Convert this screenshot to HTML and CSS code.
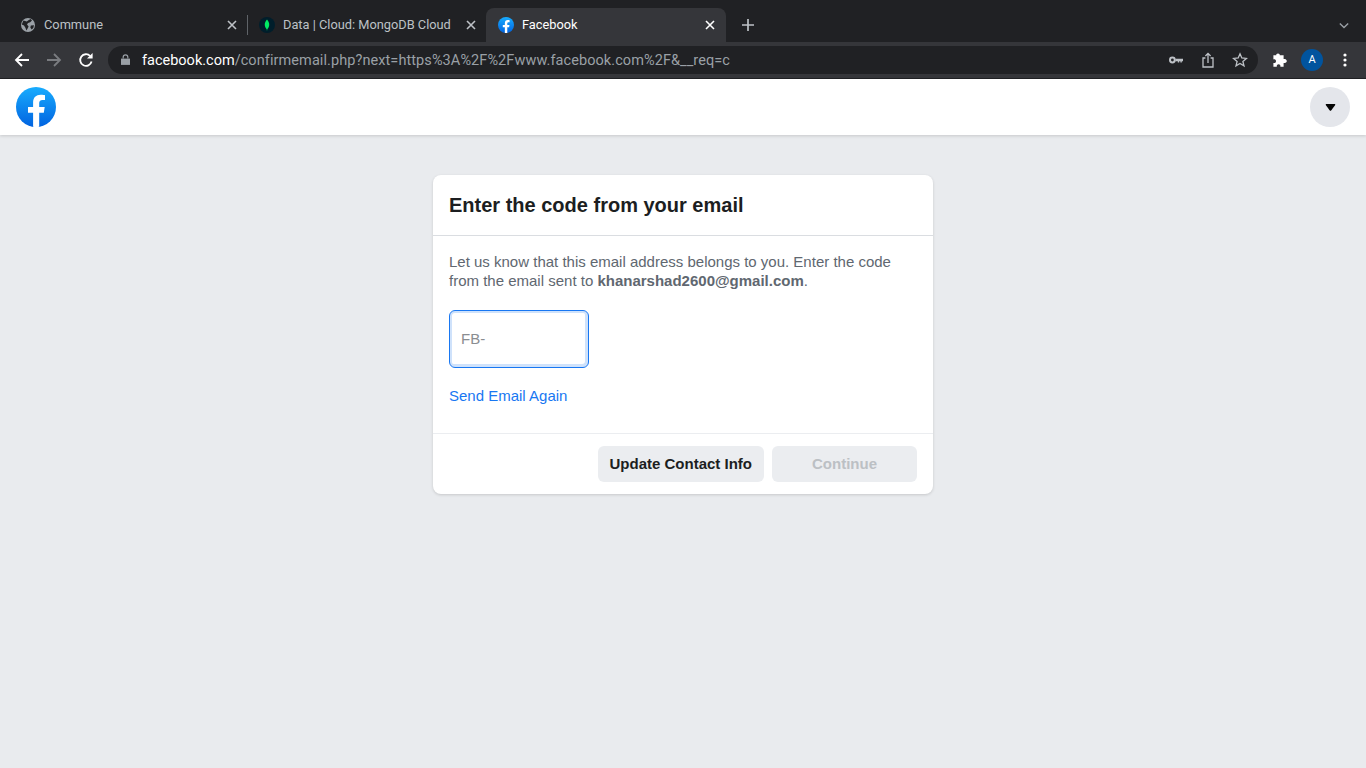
FILE: index.html
```html
<!DOCTYPE html>
<html>
<head>
    <meta charset="UTF-8">
    <title>Facebook</title>
    <link rel="stylesheet" href="styles.css">
</head>
<body>
    <div class="tabstrip">
        <div class="tab">
            <svg class="favicon" viewBox="0 0 16 16"><circle cx="8" cy="8" r="7" fill="#9aa0a6"/><path d="M3.4 3.6 6.8 4.6 8.4 3.2 10.6 2 12 3.4 10.2 5.2 8 6 7 7.6 8.6 9.4 7.6 11.4 6.4 13.6 5.4 10.8 4 8.6 1.8 7.4Z" fill="#202124"/><path d="M10.8 8.6 14 8.2 13.4 10.8 11.8 12.6 10.4 10.8Z" fill="#202124"/></svg>
            <span class="tab-title">Commune</span>
            <svg class="tab-close" viewBox="0 0 10 10"><path d="M1 1 9 9M9 1 1 9"/></svg>
        </div>
        <div class="tab tab-sep">
            <svg class="favicon" viewBox="0 0 16 16"><circle cx="8" cy="8" r="8" fill="#001e2b"/><path d="M8 2.5C9.8 4.6 10.4 6.4 10.2 8.2 10 10.2 8.9 11.4 8.3 12.2L8 14 7.7 12.2C7.1 11.4 6 10.2 5.8 8.2 5.6 6.4 6.2 4.6 8 2.5Z" fill="#00ed64"/></svg>
            <span class="tab-title">Data | Cloud: MongoDB Cloud</span>
            <svg class="tab-close" viewBox="0 0 10 10"><path d="M1 1 9 9M9 1 1 9"/></svg>
        </div>
        <div class="tab tab-active">
            <svg class="favicon" viewBox="0 0 40 40"><defs><linearGradient id="fbtab" x1="0" y1="0" x2="0" y2="1"><stop offset="0" stop-color="#18acfe"/><stop offset="1" stop-color="#0163e0"/></linearGradient></defs><circle cx="20" cy="20" r="20" fill="url(#fbtab)"/><path d="M27.8 25.8 28.7 20H23.2V16.2C23.2 14.6 24 13.1 26.5 13.1H29V8.2C29 8.2 26.7 7.8 24.6 7.8 20.1 7.8 17.1 10.6 17.1 15.5V20H12V25.8H17.1V39.8C18.1 40 19 40 20.1 40 21.2 40 22.2 40 23.2 39.8V25.8Z" fill="#fff"/></svg>
            <span class="tab-title">Facebook</span>
            <svg class="tab-close" viewBox="0 0 10 10"><path d="M1 1 9 9M9 1 1 9"/></svg>
        </div>
        <svg class="new-tab" viewBox="0 0 12 12"><path d="M6 0V12M0 6H12"/></svg>
        <svg class="tab-search" viewBox="0 0 12 8"><path d="M1 1.5 6 6.5 11 1.5"/></svg>
    </div>

    <div class="toolbar">
        <svg class="nav-icon" viewBox="0 0 16 16"><path d="M15 8H2M8 2 2 8 8 14"/></svg>
        <svg class="nav-icon nav-off" viewBox="0 0 16 16"><path d="M1 8H14M8 2 14 8 8 14"/></svg>
        <svg class="nav-icon" viewBox="0 0 16 16"><path d="M13.6 9.6A5.8 5.8 0 1 1 12.2 4"/><path class="solid" d="M14.6 1V6.6H9Z"/></svg>
        <div class="omnibox">
            <svg class="lock" viewBox="0 0 10 12"><path d="M0 5H10V12H0Z"/><path class="ring" d="M2.4 5V3.4A2.6 2.6 0 0 1 7.6 3.4V5"/></svg>
            <span class="url"><span class="url-host">facebook.com</span>/confirmemail.php?next=https%3A%2F%2Fwww.facebook.com%2F&amp;__req=c</span>
            <svg class="omni-icon" viewBox="0 0 16 16"><circle cx="4.4" cy="8" r="2.4" fill="none" stroke="#bdc1c6" stroke-width="2"/><path d="M7.4 6.8H15V9.2H13.8V10.4H12.4V9.2H11.2V10.4H9.8V9.2H7.4Z" fill="#bdc1c6"/></svg>
            <svg class="omni-icon" viewBox="0 0 16 16"><path class="line" d="M5.4 6H3V15H13V6H10.6M8 11V1.5M5.4 4 8 1.4 10.6 4"/></svg>
            <svg class="omni-icon" viewBox="0 0 16 16"><path class="line" d="M8 1.8 9.8 6 14.4 6.4 10.9 9.4 12 13.9 8 11.5 4 13.9 5.1 9.4 1.6 6.4 6.2 6Z"/></svg>
        </div>
        <svg class="ext-icon" viewBox="0 0 16 16"><path d="M6 1.5C7.2 1.5 7.8 2.3 7.8 3.2H11.6V7C13 6.8 14.8 7.4 14.8 9 14.8 10.6 13 11.2 11.6 11V14.8H8.4C8.6 13.4 8 12.2 6.6 12.2 5.2 12.2 4.6 13.4 4.8 14.8H1.4V11C2.8 11.2 4 10.6 4 9.2 4 7.8 2.8 7.2 1.4 7.4V3.2H4.2C4.2 2.3 4.8 1.5 6 1.5Z"/></svg>
        <div class="avatar">A</div>
        <svg class="menu-icon" viewBox="0 0 4 14"><circle cx="2" cy="2" r="1.6"/><circle cx="2" cy="7" r="1.6"/><circle cx="2" cy="12" r="1.6"/></svg>
    </div>

    <header class="fb-header">
        <svg class="fb-logo" viewBox="0 0 40 40"><defs><linearGradient id="fblogo" x1="0" y1="0" x2="0" y2="1"><stop offset="0" stop-color="#18acfe"/><stop offset="1" stop-color="#0163e0"/></linearGradient></defs><circle cx="20" cy="20" r="20" fill="url(#fblogo)"/><path d="M27.8 25.8 28.7 20H23.2V16.2C23.2 14.6 24 13.1 26.5 13.1H29V8.2C29 8.2 26.7 7.8 24.6 7.8 20.1 7.8 17.1 10.6 17.1 15.5V20H12V25.8H17.1V39.8C18.1 40 19 40 20.1 40 21.2 40 22.2 40 23.2 39.8V25.8Z" fill="#fff"/></svg>
        <div class="account-btn"><svg viewBox="0 0 12 8"><path d="M0.6 1.2C0.4 0.6 0.7 0 1.4 0H10.6C11.3 0 11.6 0.6 11.4 1.2 11.2 1.6 7 7.2 6.6 7.6 6.3 7.9 5.7 7.9 5.4 7.6 5 7.2 0.8 1.6 0.6 1.2Z"/></svg></div>
    </header>

    <main class="page">
        <div class="card">
            <h2 class="card-title">Enter the code from your email</h2>
            <div class="card-body">
                <p class="card-text">Let us know that this email address belongs to you. Enter the code from the email sent to <strong>khanarshad2600@gmail.com</strong>.</p>
                <input class="code-input" type="text" placeholder="FB-">
                <a class="resend" href="#">Send Email Again</a>
            </div>
            <div class="card-footer">
                <button class="btn">Update Contact Info</button>
                <button class="btn btn-disabled" disabled>Continue</button>
            </div>
        </div>
    </main>
</body>
</html>
```

FILE: styles.css
```css
* {
  box-sizing: border-box;
}

html, body {
  height: 100%;
}

body {
  margin: 0;
  display: flex;
  flex-direction: column;
  overflow: hidden;
  background-color: #e9ebee;
  font-family: "Liberation Sans", Arial, sans-serif;
}

/* browser chrome */
.tabstrip {
  display: flex;
  align-items: flex-end;
  height: 42px;
  padding-left: 8px;
  background-color: #202124;
}

.tab {
  position: relative;
  display: flex;
  align-items: center;
  width: 239px;
  height: 34px;
  padding: 0 9px 0 12px;
  color: #bdc1c6;
  font-family: Roboto, sans-serif;
  font-size: 12.8px;
}

.tab-sep::before {
  content: "";
  position: absolute;
  left: 0;
  top: 7px;
  width: 1px;
  height: 20px;
  background-color: #5f6368;
}

.tab-active {
  width: 240px;
  padding-right: 10px;
  border-radius: 8px 8px 0 0;
  background-color: #35363a;
  color: #ffffff;
}

.favicon {
  flex: none;
  width: 16px;
  height: 16px;
  margin-right: 8px;
}

.tab-title {
  flex: 1;
  padding-bottom: 2px;
  white-space: nowrap;
  overflow: hidden;
}

.tab-close {
  flex: none;
  width: 10px;
  height: 10px;
  margin-right: 1px;
  fill: none;
  stroke: #bdc1c6;
  stroke-width: 1.6;
}

.tab-active .tab-close {
  stroke: #ffffff;
}

.new-tab {
  align-self: center;
  width: 12px;
  height: 12px;
  margin: 8px 0 0 16px;
  fill: none;
  stroke: #bdc1c6;
  stroke-width: 1.7;
}

.tab-search {
  align-self: center;
  width: 10px;
  height: 7px;
  margin: 8px 17px 0 auto;
  fill: none;
  stroke: #9aa0a6;
  stroke-width: 1.6;
}

.toolbar {
  display: flex;
  align-items: center;
  height: 37px;
  padding: 0 14px 1px 14px;
  border-bottom: 1px solid #202124;
  background-color: #35363a;
}

.nav-icon {
  flex: none;
  width: 16px;
  height: 16px;
  margin-right: 16px;
  fill: none;
  stroke: #ffffff;
  stroke-width: 1.8;
}

.nav-off {
  stroke: #7a7c80;
}

.nav-icon .solid {
  fill: #ffffff;
  stroke: none;
}

.omnibox {
  display: flex;
  align-items: center;
  width: 1150px;
  height: 28px;
  margin-left: -2px;
  padding: 0 10px 0 13px;
  border-radius: 14px;
  background-color: #202124;
}

.lock {
  flex: none;
  width: 9px;
  height: 11px;
  margin-right: 12px;
  fill: #9aa0a6;
}

.lock .ring {
  fill: none;
  stroke: #9aa0a6;
  stroke-width: 1.3;
}

.url {
  flex: 1;
  padding-top: 2px;
  color: #9aa0a6;
  font-family: Roboto, sans-serif;
  font-size: 14.5px;
  letter-spacing: 0.08px;
  white-space: nowrap;
}

.url-host {
  color: #ffffff;
  letter-spacing: 0;
}

.omni-icon {
  flex: none;
  width: 16px;
  height: 16px;
  margin-left: 16px;
}

.omni-icon .line {
  fill: none;
  stroke: #bdc1c6;
  stroke-width: 1.3;
}

.ext-icon {
  flex: none;
  width: 16px;
  height: 16px;
  margin-left: 14px;
  fill: #ffffff;
}

.avatar {
  flex: none;
  width: 22px;
  height: 22px;
  margin-left: 13px;
  border-radius: 50%;
  background-color: #01549e;
  color: #ffffff;
  font-family: Roboto, sans-serif;
  font-size: 11px;
  line-height: 22px;
  text-align: center;
}

.menu-icon {
  flex: none;
  width: 4px;
  height: 14px;
  margin-left: 20px;
  fill: #ffffff;
}

/* facebook page */
.fb-header {
  display: flex;
  align-items: center;
  justify-content: space-between;
  flex: none;
  height: 56px;
  padding: 0 16px;
  background-color: #ffffff;
  box-shadow: 0 1px 3px rgba(0, 0, 0, 0.15);
}

.fb-logo {
  width: 40px;
  height: 40px;
}

.account-btn {
  display: flex;
  align-items: center;
  justify-content: center;
  width: 40px;
  height: 40px;
  border-radius: 50%;
  background-color: #e4e6eb;
}

.account-btn svg {
  width: 11px;
  height: 7px;
  fill: #050505;
}

.page {
  flex: 1;
  padding-top: 40px;
}

.card {
  width: 500px;
  margin: 0 auto;
  border-radius: 8px;
  background-color: #ffffff;
  box-shadow: 0 1px 3px rgba(0, 0, 0, 0.15);
}

.card-title {
  height: 61px;
  margin: 0;
  padding: 0 16px;
  border-bottom: 1px solid #dadde1;
  color: #1c1e21;
  font-size: 20px;
  font-weight: bold;
  line-height: 60px;
}

.card-body {
  display: flex;
  flex-direction: column;
  align-items: flex-start;
  height: 198px;
  padding: 16px 16px 0 16px;
  border-bottom: 1px solid #ebedf0;
}

.card-text {
  margin: 0 0 20px 0;
  color: #606770;
  font-size: 15px;
  line-height: 19px;
}

.code-input {
  width: 140px;
  height: 58px;
  padding: 0 11px 2px 11px;
  border: 1px solid #1877f2;
  border-radius: 6px;
  box-shadow: inset 0 0 0 2px #cfe2fb, inset -1px -1px 0 2px #cfe2fb;
  color: #1c1e21;
  font-family: "Liberation Sans", Arial, sans-serif;
  font-size: 15px;
  outline: none;
}

.code-input::placeholder {
  color: #8a8d91;
}

.resend {
  margin-top: 18px;
  color: #1877f2;
  font-size: 15px;
  line-height: 19px;
  text-decoration: none;
}

.card-footer {
  display: flex;
  justify-content: flex-end;
  gap: 8px;
  padding: 12px 16px;
}

.btn {
  height: 36px;
  padding: 0 12px 2px 12px;
  border: none;
  border-radius: 6px;
  background-color: #ebedf0;
  color: #1c1e21;
  font-family: "Liberation Sans", Arial, sans-serif;
  font-size: 15px;
  font-weight: bold;
}

.btn-disabled {
  width: 145px;
  color: #bcc0c4;
}
```
